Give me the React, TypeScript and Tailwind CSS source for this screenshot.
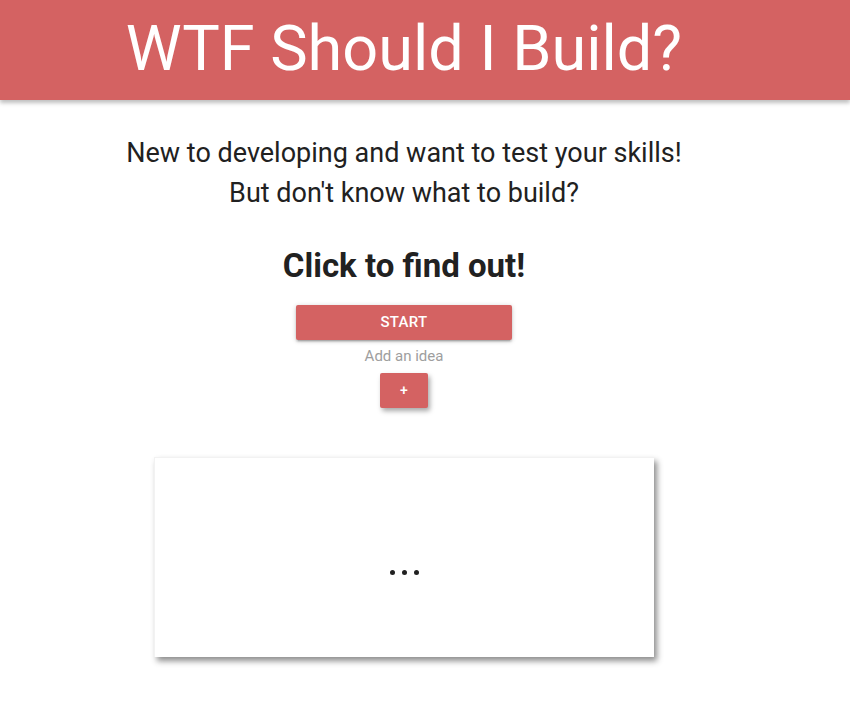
export default function App() {
  return (
    <div className="min-h-screen bg-white font-['Roboto',sans-serif] text-[#212121]">
      <header className="h-[100px] bg-[#d46262] shadow-[0_3px_4px_rgba(0,0,0,0.25)]">
        <div className="w-[808px] h-full flex items-center justify-center">
          <h1 className="text-[63px] leading-none font-normal text-white pb-[4px]">
            WTF Should I Build?
          </h1>
        </div>
      </header>

      <main className="w-[808px] flex flex-col items-center">
        <p className="mt-[33px] text-[27px] leading-[40px] text-center">
          New to developing and want to test your skills!
          <br />
          But don't know what to build?
        </p>

        <h2 className="mt-[33px] text-[33px] leading-[40px] font-bold">
          Click to find out!
        </h2>

        <button className="mt-[19px] w-[216px] h-[35px] rounded-[2px] bg-[#d46262] text-white text-[15px] font-medium tracking-[0.3px] uppercase shadow-[0_2px_2px_rgba(0,0,0,0.14),0_3px_1px_-2px_rgba(0,0,0,0.12),0_1px_5px_rgba(0,0,0,0.2)]">
          Start
        </button>

        <div className="mt-[6px] text-[15px] leading-[20px] text-[#9e9e9e]">
          Add an idea
        </div>

        <button className="mt-[7px] w-[48px] h-[35px] rounded-[2px] bg-[#d46262] text-white text-[14px] font-medium shadow-[2px_3px_5px_rgba(0,0,0,0.35)]">
          +
        </button>

        <div className="mt-[49px] w-[500px] h-[200px] bg-white flex items-center justify-center shadow-[3px_4px_6px_rgba(0,0,0,0.45)] border-t border-l border-[#f2f2f2]">
          <div className="flex gap-[7px] pt-[30px]">
            <span className="w-[5px] h-[5px] rounded-full bg-[#212121]" />
            <span className="w-[5px] h-[5px] rounded-full bg-[#212121]" />
            <span className="w-[5px] h-[5px] rounded-full bg-[#212121]" />
          </div>
        </div>
      </main>
    </div>
  );
}
